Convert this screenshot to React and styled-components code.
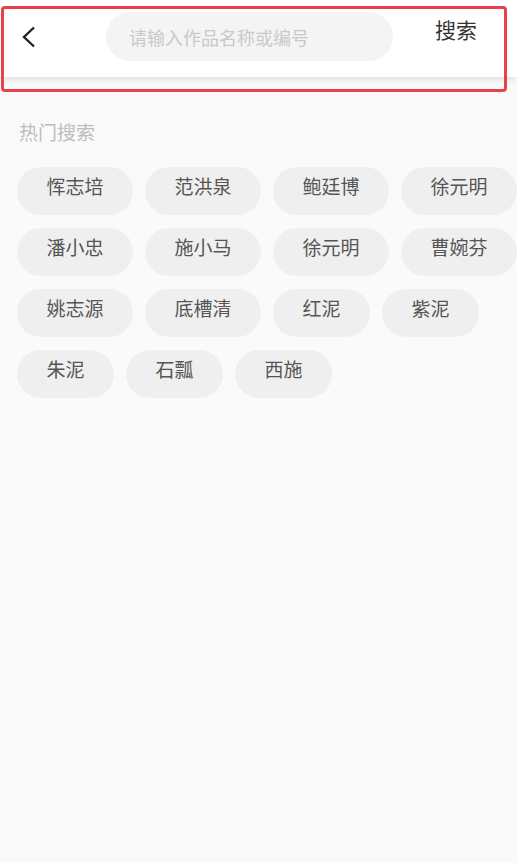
import React from "react";
import styled, { createGlobalStyle } from "styled-components";

const GlobalStyle = createGlobalStyle`
    html, body {
        margin: 0;
        padding: 0;
        background: #fafafa;
        font-family: "Noto Sans CJK SC", "Noto Sans", sans-serif;
        overflow-x: hidden;
    }
`;

const Page = styled.div`
    position: relative;
    min-height: 863px;
    background: #fafafa;
    overflow: hidden;
`;

const Header = styled.div`
    display: flex;
    align-items: flex-start;
    height: 77px;
    background: #fff;
    box-shadow: 0 2px 8px rgba(0, 0, 0, 0.12);
`;

const BackButton = styled.div`
    width: 58px;
    padding-top: 26px;
    padding-left: 20px;
    box-sizing: border-box;
`;

const SearchBox = styled.div`
    display: flex;
    align-items: center;
    margin-top: 12px;
    margin-left: 48px;
    width: 287px;
    height: 49px;
    border-radius: 25px;
    background: #f4f4f4;
    padding-left: 23px;
    box-sizing: border-box;
    font-size: 18px;
    color: #c9c9c9;
`;

const SearchText = styled.div`
    margin-left: 42px;
    margin-top: 19px;
    font-size: 21px;
    line-height: 1;
    color: #333;
`;

const Highlight = styled.div`
    position: absolute;
    left: 1px;
    top: 6px;
    width: 506px;
    height: 86px;
    box-sizing: border-box;
    border: 3.5px solid #e8414a;
    border-radius: 4px;
    pointer-events: none;
`;

const Section = styled.div`
    padding: 42px 0 0 17px;
`;

const SectionTitle = styled.div`
    margin-left: 2px;
    font-size: 19px;
    line-height: 26px;
    color: #bdbdbd;
`;

const TagList = styled.div`
    display: flex;
    flex-wrap: wrap;
    gap: 13px 12px;
    margin-top: 22px;
    margin-right: -8px;
`;

const Tag = styled.div`
    height: 48px;
    padding: 0 29.5px;
    border-radius: 24px;
    background: #efefef;
    color: #555;
    font-size: 19px;
    line-height: 38px;
    white-space: nowrap;
`;

const tags = [
    "恽志培", "范洪泉", "鲍廷博", "徐元明",
    "潘小忠", "施小马", "徐元明", "曹婉芬",
    "姚志源", "底槽清", "红泥", "紫泥",
    "朱泥", "石瓢", "西施",
];

export default function App() {
    return (
        <Page>
            <GlobalStyle />
            <Header>
                <BackButton>
                    <svg width="18" height="22" viewBox="0 0 18 22">
                        <path d="M14 1.5 L4 11 L14 20.5" fill="none" stroke="#222" strokeWidth="2.4" />
                    </svg>
                </BackButton>
                <SearchBox>请输入作品名称或编号</SearchBox>
                <SearchText>搜索</SearchText>
            </Header>
            <Highlight />
            <Section>
                <SectionTitle>热门搜索</SectionTitle>
                <TagList>
                    {tags.map((t, i) => (
                        <Tag key={i}>{t}</Tag>
                    ))}
                </TagList>
            </Section>
        </Page>
    );
}
